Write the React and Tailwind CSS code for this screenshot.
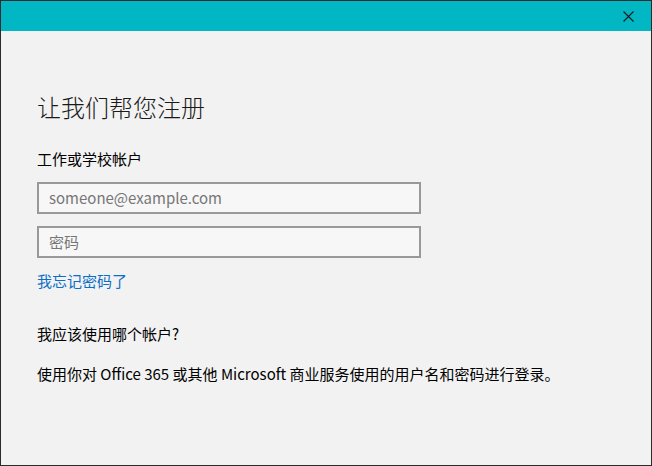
import React from "react";

export default function App() {
  return (
    <div className="w-[652px] h-[466px] flex flex-col border border-[#2b2b2b] bg-[#f2f2f2] overflow-hidden">
      <div className="h-[30px] bg-[#00b7c3] flex items-center justify-end shrink-0">
        <div className="w-[46px] h-[30px] flex items-center justify-center">
          <svg width="11" height="11" viewBox="0 0 11 11">
            <path d="M0.5 0.5 L10.5 10.5 M10.5 0.5 L0.5 10.5" stroke="#1a1a1a" strokeWidth="1.1" fill="none" />
          </svg>
        </div>
      </div>
      <div className="flex flex-col pl-[36px] pt-[60px] font-['Noto_Sans_CJK_SC','Noto_Sans',sans-serif] text-[#000]">
        <h1 className="text-[24px] leading-[32px] font-light text-[#1a1a1a]">让我们帮您注册</h1>
        <div className="mt-[26px] text-[15px] leading-[20px]">工作或学校帐户</div>
        <div className="mt-[13px] w-[384px] h-[32px] border-2 border-[#999] bg-[#f7f7f7] flex items-center px-[10px] text-[15px] text-[#767676]">someone@example.com</div>
        <div className="mt-[12px] w-[384px] h-[32px] border-2 border-[#999] bg-[#f7f7f7] flex items-center px-[10px] text-[15px] text-[#767676]">密码</div>
        <div className="mt-[13px] text-[15px] leading-[20px] text-[#0b6fc6]">我忘记密码了</div>
        <div className="mt-[33px] text-[15px] leading-[20px]">我应该使用哪个帐户?</div>
        <div className="mt-[20px] text-[15px] leading-[20px]">使用你对 Office 365 或其他 Microsoft 商业服务使用的用户名和密码进行登录。</div>
      </div>
    </div>
  );
}
